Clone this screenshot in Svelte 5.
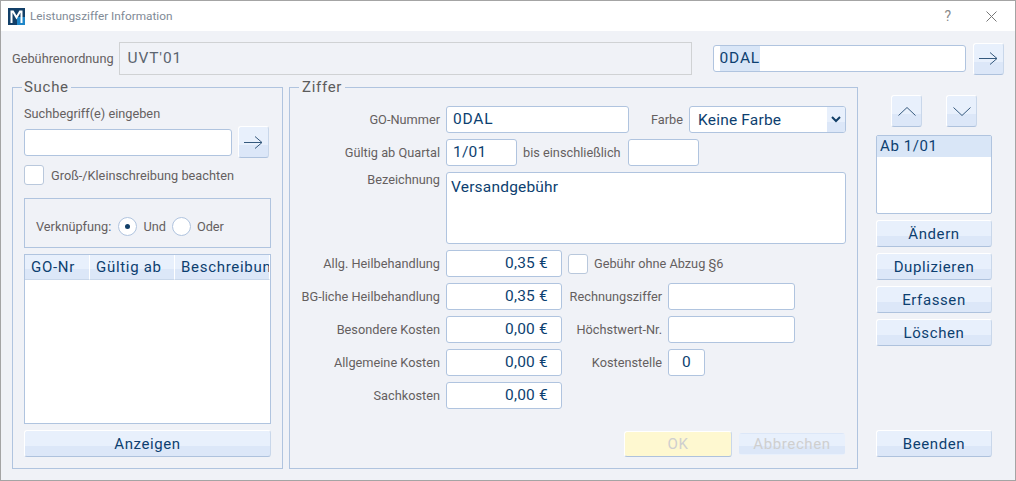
<script>
  const moneyRows = [
    { label: 'Allg. Heilbehandlung', value: '0,35 €' },
    { label: 'BG-liche Heilbehandlung', value: '0,35 €', sideLabel: 'Rechnungsziffer', side: 'wide' },
    { label: 'Besondere Kosten', value: '0,00 €', sideLabel: 'Höchstwert-Nr.', side: 'wide' },
    { label: 'Allgemeine Kosten', value: '0,00 €', sideLabel: 'Kostenstelle', side: 'small', sideValue: '0' },
    { label: 'Sachkosten', value: '0,00 €' },
  ];
  const actions = ['Ändern', 'Duplizieren', 'Erfassen', 'Löschen'];
  let mode = $state('und');
</script>

<div class="window">
  <header class="titlebar">
    <svg class="logo" width="17" height="17" viewBox="0 0 17 17">
      <rect width="17" height="17" fill="#123f68" />
      <rect x="9" y="9" width="8" height="8" fill="#1f86c8" />
      <path d="M3.500 15V3.500h1.500l3.500 6 3.500-6h1.500V15" fill="none" stroke="#fff" stroke-width="2" />
    </svg>
    <span class="title">Leistungsziffer Information</span>
    <span class="help">?</span>
    <svg class="close" width="11" height="11" viewBox="0 0 11 11">
      <path d="M.5.5l10 10M10.500.5l-10 10" stroke="#777" fill="none" />
    </svg>
  </header>

  <div class="body">
    <div class="top-row">
      <span class="lbl">Gebührenordnung</span>
      <div class="readonly">UVT'01</div>
      <div class="input code"><span class="selected">0DAL</span></div>
      <button class="btn icon-btn" aria-label="weiter">
        <svg width="19" height="13" viewBox="0 0 19 13"><path d="M0 6.500h18M11 .5l7 6-7 6" fill="none" stroke="#35597d" /></svg>
      </button>
    </div>

    <div class="main">
      <fieldset class="suche">
        <legend>Suche</legend>
        <div class="lbl search-lbl">Suchbegriff(e) eingeben</div>
        <div class="search-row">
          <div class="input search-input"></div>
          <button class="btn icon-btn" aria-label="suchen">
            <svg width="19" height="13" viewBox="0 0 19 13"><path d="M0 6.500h18M11 .5l7 6-7 6" fill="none" stroke="#35597d" /></svg>
          </button>
        </div>
        <div class="check-row">
          <span class="check"></span>
          <span class="lbl">Groß-/Kleinschreibung beachten</span>
        </div>
        <div class="link-box">
          <span class="lbl link-lbl">Verknüpfung:</span>
          <button class="radio" class:on={mode === 'und'} onclick={() => mode = 'und'} aria-label="Und"></button>
          <span class="lbl">Und</span>
          <button class="radio" class:on={mode === 'oder'} onclick={() => mode = 'oder'} aria-label="Oder"></button>
          <span class="lbl">Oder</span>
        </div>
        <div class="table">
          <div class="thead">
            <span class="th go-col">GO-Nr</span>
            <span class="th date-col">Gültig ab</span>
            <span class="th last">Beschreibun</span>
          </div>
        </div>
        <button class="btn wide-btn">Anzeigen</button>
      </fieldset>

      <fieldset class="ziffer">
        <legend>Ziffer</legend>
        <div class="row">
          <span class="lbl col">GO-Nummer</span>
          <div class="input go">0DAL</div>
          <span class="lbl farbe">Farbe</span>
          <div class="input select">
            <span class="select-value">Keine Farbe</span>
            <span class="drop">
              <svg width="10" height="7" viewBox="0 0 10 7"><path d="M1 1l4 4 4-4" fill="none" stroke="#123f68" stroke-width="2" /></svg>
            </span>
          </div>
        </div>
        <div class="row">
          <span class="lbl col">Gültig ab Quartal</span>
          <div class="input quarter">1/01</div>
          <span class="lbl until">bis einschließlich</span>
          <div class="input quarter"></div>
        </div>
        <div class="row desc-row">
          <span class="lbl col">Bezeichnung</span>
          <div class="input desc">Versandgebühr</div>
        </div>
        {#each moneyRows as r, i}
          <div class="row money-row">
            <span class="lbl col">{r.label}</span>
            <div class="input money">{r.value}</div>
            {#if i === 0}
              <span class="check"></span>
              <span class="lbl">Gebühr ohne Abzug §6</span>
            {:else if r.sideLabel}
              <span class="lbl side-lbl">{r.sideLabel}</span>
              <div class="input" class:side-wide={r.side === 'wide'} class:side-small={r.side === 'small'}>{r.sideValue ?? ''}</div>
            {/if}
          </div>
        {/each}
        <div class="form-actions">
          <button class="btn ok" disabled>OK</button>
          <button class="btn cancel" disabled>Abbrechen</button>
        </div>
      </fieldset>

      <aside class="side">
        <div class="arrows">
          <button class="btn icon-btn" aria-label="hoch">
            <svg width="18" height="9" viewBox="0 0 18 9"><path d="M.5 8.500L9 .5l8.500 8" fill="none" stroke="#35597d" /></svg>
          </button>
          <button class="btn icon-btn" aria-label="runter">
            <svg width="18" height="9" viewBox="0 0 18 9"><path d="M.5.5L9 8.500l8.500-8" fill="none" stroke="#35597d" /></svg>
          </button>
        </div>
        <div class="list"><div class="list-item">Ab 1/01</div></div>
        <div class="action-list">
          {#each actions as a}
            <button class="btn action">{a}</button>
          {/each}
        </div>
        <button class="btn action end">Beenden</button>
      </aside>
    </div>
  </div>
</div>

<style>
  :global(body) { margin: 0; background: #fff; }
  .window {
    width: 1016px; height: 481px; box-sizing: border-box;
    border: 1px solid #a4a4a4;
    display: flex; flex-direction: column;
    font-family: Roboto, "Liberation Sans", sans-serif;
    overflow: hidden;
  }
  .titlebar {
    height: 30px; flex-shrink: 0; background: #fff;
    display: flex; align-items: center; padding-left: 7px;
  }
  .logo { flex-shrink: 0; }
  .title { margin-left: 5px; font-size: 11.800px; color: #7f8a96; flex: 1; }
  .help { color: #8a8a8a; font-size: 14px; margin-right: 35px; }
  .close { margin-right: 18px; }
  .body {
    flex: 1; background: #f0f2f7; padding: 11px 11px 0;
    display: flex; flex-direction: column;
  }
  .top-row { display: flex; align-items: center; height: 33px; }
  .lbl { font-size: 12.750px; color: #655f5f; white-space: nowrap; }
  .readonly {
    width: 573px; height: 33px; box-sizing: border-box; margin-left: 5px; flex-shrink: 0;
    border: 1px solid #d0d2d4; padding-left: 8px;
    font-size: 15.500px; line-height: 30px; letter-spacing: 0.85px; color: #5c6570;
  }
  .input {
    box-sizing: border-box; background: #fff; height: 27px;
    border: 1px solid #b0c4df; border-radius: 3px; padding: 0 6px;
    font-size: 15.500px; line-height: 25px; letter-spacing: 0.2px; color: #0d3f70;
  }
  .code { width: 253px; margin-left: 21px; margin-right: 7px; letter-spacing: 0.8px; flex-shrink: 0; }
  .selected { background: #d9e6f7; display: inline-block; }
  .btn {
    box-sizing: border-box; padding: 0; margin: 0; cursor: pointer; flex-shrink: 0;
    border: 1px solid #fff; border-bottom-color: #aec2dd; border-right-color: #c9d7ea; border-radius: 3px;
    background: linear-gradient(#e8f0fc 0 60%, #dce7f8 60% 100%);
    font: 15px Roboto, sans-serif; letter-spacing: 0.6px; color: #0d3f70;
    display: flex; align-items: center; justify-content: center;
  }
  .icon-btn { width: 31px; height: 32px; }
  .main { display: flex; margin-top: 4px; flex: 1; }
  fieldset {
    margin: 0; box-sizing: border-box; min-width: 0; height: 390px;
    border: 1px solid #b0c4df; padding: 0;
  }
  legend {
    font-size: 15px; line-height: 17px; letter-spacing: 0.7px; color: #5c5c5c;
    margin-left: -2px; padding: 0 2px;
  }
  .suche { width: 271px; padding: 0 11px; display: flex; flex-direction: column; }
  .search-lbl { margin-top: 10px; }
  .search-row { display: flex; gap: 6px; margin-top: 5px; align-items: center; }
  .search-input { width: 208px; }
  .check-row { display: flex; align-items: center; gap: 7px; margin-top: 7px; }
  .check {
    width: 20px; height: 20px; box-sizing: border-box; flex-shrink: 0; background: #fff;
    border: 1px solid #b9c8dc; border-radius: 3px;
  }
  .link-box {
    margin-top: 13px; height: 50px; width: 247px; box-sizing: border-box;
    border: 1px solid #b0c4df; display: flex; align-items: center;
    padding: 6px 11px 0; gap: 6px;
  }
  .radio {
    width: 19px; height: 19px; padding: 0; border-radius: 50%; box-sizing: border-box;
    background: #fff; border: 1px solid #b0c4df; position: relative; cursor: pointer;
  }
  .radio.on::after {
    content: ''; position: absolute; left: 6px; top: 6px;
    width: 5px; height: 5px; border-radius: 50%; background: #123f68;
  }
  .link-lbl { margin-right: 1px; }
  .table {
    margin-top: 6px; width: 247px; height: 170px; box-sizing: border-box;
    background: #fff; border: 1px solid #b0c4df; overflow: hidden; flex-shrink: 0;
  }
  .thead { display: flex; height: 25px; white-space: nowrap; }
  .th {
    box-sizing: border-box; flex-shrink: 0; padding-left: 6px; line-height: 24px;
    font-size: 15px; letter-spacing: 0.7px; color: #0d3f70;
    background: linear-gradient(#e8f0fc 0 60%, #dce7f8 60% 100%);
    border-right: 1px solid #fff; border-bottom: 1px solid #c9d7ea;
  }
  .go-col { width: 65px; }
  .date-col { width: 85px; }
  .th.last { flex: 1; overflow: hidden; }
  .wide-btn { width: 247px; height: 27px; margin-top: 6px; }
  .ziffer { width: 569px; margin-left: 6px; }
  .ziffer legend { margin-left: 9px; padding: 0 3px; }
  .row { display: flex; align-items: center; margin-top: 6px; gap: 6px; }
  .ziffer .row:first-of-type { margin-top: 10px; }
  .col { width: 150px; text-align: right; flex-shrink: 0; }
  .go { width: 183px; letter-spacing: 0.8px; }
  .farbe { margin-left: 16px; }
  .select { width: 157px; display: flex; justify-content: space-between; padding: 0 0 0 8px; overflow: hidden; }
  .select-value { padding-top: 1px; }
  .drop {
    width: 18px; height: 25px; display: flex; align-items: center; justify-content: center;
    background: linear-gradient(#e8f0fc 0 60%, #dce7f8 60% 100%);
  }
  .quarter { width: 71px; }
  .until { margin-right: 1px; }
  .desc-row { align-items: flex-start; }
  .desc { width: 400px; height: 72px; padding: 4px; line-height: 20px; }
  .money { width: 116px; text-align: right; padding-right: 13px; }
  .side-lbl { width: 94px; text-align: right; }
  .side-wide { width: 127px; }
  .side-small { width: 37px; text-align: center; }
  .form-actions { display: flex; align-items: center; gap: 7px; margin-top: 22px; margin-left: 334px; }
  .ok { width: 108px; height: 26px; background: #fef8d0; color: #cfcfcf; cursor: default; }
  .cancel { width: 106px; height: 22px; border-color: transparent; color: #cfcfcf; cursor: default; }
  .side { width: 116px; margin-left: 18px; display: flex; flex-direction: column; }
  .arrows { display: flex; justify-content: space-between; padding: 0 15px; margin-top: 16px; height: 32px; }
  .list {
    margin-top: 8px; height: 79px; box-sizing: border-box;
    background: #fff; border: 1px solid #b0c4df; border-radius: 2px;
  }
  .list-item {
    background: #d9e6f7; height: 21px; line-height: 21px; padding-left: 3px;
    font-size: 15px; letter-spacing: 0.6px; color: #0d3f70;
  }
  .action-list { display: flex; flex-direction: column; gap: 6px; margin-top: 6px; }
  .action { width: 116px; height: 27px; }
  .end { margin-top: auto; margin-bottom: 23px; }
</style>
